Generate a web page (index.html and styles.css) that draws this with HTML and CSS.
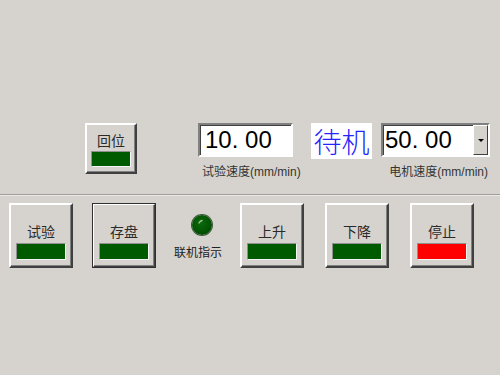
FILE: index.html
```html
<!DOCTYPE html>
<html lang="zh-CN">
<head>
    <meta charset="UTF-8">
    <meta name="viewport" content="width=device-width, initial-scale=1.0">
    <title>控制面板</title>
    <link rel="stylesheet" href="styles.css">
</head>
<body>

<div class="panel">
    <!-- top row: home button, speeds, state -->
    <div class="top-row">
        <div class="btn btn-small">
            <span class="btn-text">回位</span>
            <div class="lamp green"></div>
        </div>

        <div class="field test-speed">
            <div class="input-box">10. 00</div>
            <div class="field-label">试验速度(mm/min)</div>
        </div>

        <div class="state-box">待机</div>

        <div class="field motor-speed">
            <div class="combo">
                <span class="combo-value">50. 00</span>
                <span class="combo-btn"><span class="arrow"></span></span>
            </div>
            <div class="field-label">电机速度(mm/min)</div>
        </div>
    </div>

    <div class="divider"></div>

    <!-- bottom row: actions -->
    <div class="bottom-row">
        <div class="btn">
            <span class="btn-text">试验</span>
            <div class="lamp green"></div>
        </div>
        <div class="btn btn-default">
            <span class="btn-text">存盘</span>
            <div class="lamp green"></div>
        </div>

        <div class="led-col">
            <div class="led">
                <svg width="20" height="20" viewBox="0 0 20 20">
                    <path d="M7 8 Q8 6 10 5.5" stroke="#9fc89f" stroke-width="1.3" fill="none" stroke-linecap="round"/>
                </svg>
            </div>
            <div class="led-label">联机指示</div>
        </div>

        <div class="btn">
            <span class="btn-text">上升</span>
            <div class="lamp green"></div>
        </div>
        <div class="btn gap-wide">
            <span class="btn-text">下降</span>
            <div class="lamp green"></div>
        </div>
        <div class="btn gap-wide">
            <span class="btn-text">停止</span>
            <div class="lamp red"></div>
        </div>
    </div>
</div>

</body>
</html>
```

FILE: styles.css
```css
body {
    margin: 0;
    background-color: #d6d3ce;
    font-family: "Liberation Sans", "Noto Sans CJK SC", sans-serif;
}

.panel {
    width: 500px;
    height: 375px;
    overflow: hidden;
}

.top-row {
    display: flex;
    align-items: flex-start;
    height: 71px;
    padding: 123px 0 0 85px;
}

.bottom-row {
    display: flex;
    align-items: flex-start;
    padding: 7px 0 0 9px;
}

.divider {
    height: 1px;
    background-color: #a09e9a;
    border-bottom: 1px solid #ebe9e6;
}

/* raised buttons */
.btn {
    box-sizing: border-box;
    width: 64px;
    height: 65px;
    border: 2px solid;
    border-color: #ffffff #404040 #404040 #ffffff;
    box-shadow: inset -1px -1px 0 #808080;
    background-color: #d6d3ce;
    display: flex;
    flex-direction: column;
    justify-content: flex-end;
    align-items: center;
    padding: 0 5px 6px 5px;
}

.btn-small {
    width: 52px;
    height: 51px;
    padding: 0 4px 5px 4px;
}

.btn-default {
    margin-left: 19px;
    outline: 1px solid #303030;
    outline-offset: -1px;
}

.gap-wide {
    margin-left: 21px;
}

.btn-text {
    font-family: "Noto Sans CJK SC", sans-serif;
    font-size: 14px;
    line-height: 14px;
    color: #2a2a2a;
    margin-bottom: 5px;
}

.btn-small .btn-text {
    margin-bottom: 4px;
}

.lamp {
    box-sizing: border-box;
    width: 100%;
    height: 17px;
    border: 1px solid;
    border-color: #909090 #f4f4f4 #f4f4f4 #909090;
}

.btn-small .lamp {
    height: 16px;
}

.lamp.green {
    background-color: #005a00;
}

.lamp.red {
    background-color: #ff0000;
}

/* speed fields */
.field {
    display: flex;
    flex-direction: column;
}

.test-speed {
    width: 95px;
    margin-left: 61px;
}

.motor-speed {
    width: 109px;
    margin-left: 9px;
    align-items: flex-end;
}

.input-box,
.combo {
    box-sizing: border-box;
    height: 34px;
    background-color: #ffffff;
    border: 2px solid;
    border-color: #808080 #ffffff #ffffff #808080;
    box-shadow: inset 1px 1px 0 #404040;
    font-size: 24px;
    line-height: 30px;
    color: #000000;
}

.input-box {
    width: 95px;
    padding-left: 5px;
}

.combo {
    width: 109px;
    display: flex;
    justify-content: space-between;
    padding-left: 2px;
}

.combo-btn {
    box-sizing: border-box;
    width: 15px;
    height: 30px;
    background-color: #d6d3ce;
    border: 1px solid;
    border-color: #ffffff #404040 #404040 #ffffff;
    display: flex;
    align-items: center;
    justify-content: center;
}

.arrow {
    width: 0;
    height: 0;
    border-left: 3px solid transparent;
    border-right: 3px solid transparent;
    border-top: 3px solid #000000;
}

.field-label {
    font-family: "Liberation Sans", "Noto Sans CJK SC", sans-serif;
    font-size: 12px;
    line-height: 14px;
    color: #333333;
    margin-top: 8px;
    white-space: nowrap;
}

.test-speed .field-label {
    padding-left: 4px;
}

.motor-speed .field-label {
    margin-right: 2px;
}

.state-box {
    margin-left: 18px;
    width: 61px;
    height: 36px;
    background-color: #ffffff;
    color: #2424ff;
    font-family: "Noto Sans CJK SC", sans-serif;
    font-size: 28px;
    font-weight: 300;
    line-height: 36px;
    text-align: center;
}

/* online indicator */
.led-col {
    width: 84px;
    display: flex;
    flex-direction: column;
    align-items: center;
}

.led {
    width: 20px;
    height: 20px;
    margin: 12px 0 0 8px;
    border-radius: 50%;
    background: radial-gradient(circle at 45% 40%, #0b6a0b 0%, #035203 60%, #013a01 100%);
    box-shadow: 0 0 0 1px #3a5a3a;
}

.led svg {
    display: block;
}

.led-label {
    font-family: "Noto Sans CJK SC", sans-serif;
    font-size: 12px;
    line-height: 14px;
    color: #222222;
    margin-top: 10px;
}
```
